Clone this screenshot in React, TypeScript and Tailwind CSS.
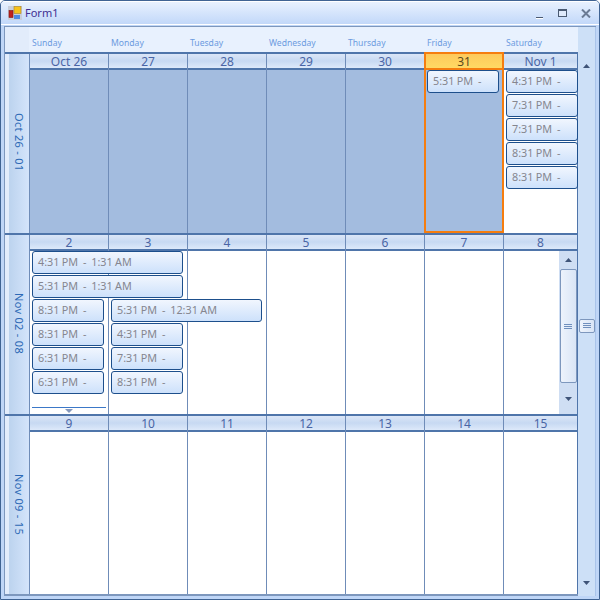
import React from "react";

interface Appt {
  text: string;
  wide?: boolean;
}

interface Day {
  label: string;
  muted?: boolean;
  selected?: boolean;
  skip?: number;
  appts?: Array<Appt>;
  more?: boolean;
  scroll?: boolean;
}

const dayNames = ["Sunday", "Monday", "Tuesday", "Wednesday", "Thursday", "Friday", "Saturday"];

const weeks: Array<{ range: string; height: string; days: Array<Day> }> = [
  {
    range: "Oct 26 - 01",
    height: "h-[181px]",
    days: [
      { label: "Oct 26", muted: true },
      { label: "27", muted: true },
      { label: "28", muted: true },
      { label: "29", muted: true },
      { label: "30", muted: true },
      { label: "31", muted: true, selected: true, appts: [{ text: "5:31 PM  -" }] },
      {
        label: "Nov 1",
        appts: [
          { text: "4:31 PM  -" },
          { text: "7:31 PM  -" },
          { text: "7:31 PM  -" },
          { text: "8:31 PM  -" },
          { text: "8:31 PM  -" },
        ],
      },
    ],
  },
  {
    range: "Nov 02 - 08",
    height: "h-[181px]",
    days: [
      {
        label: "2",
        more: true,
        appts: [
          { text: "4:31 PM  -  1:31 AM", wide: true },
          { text: "5:31 PM  -  1:31 AM", wide: true },
          { text: "8:31 PM  -" },
          { text: "8:31 PM  -" },
          { text: "6:31 PM  -" },
          { text: "6:31 PM  -" },
        ],
      },
      {
        label: "3",
        skip: 2,
        appts: [
          { text: "5:31 PM  -  12:31 AM", wide: true },
          { text: "4:31 PM  -" },
          { text: "7:31 PM  -" },
          { text: "8:31 PM  -" },
        ],
      },
      { label: "4" },
      { label: "5" },
      { label: "6" },
      { label: "7" },
      { label: "8", scroll: true },
    ],
  },
  {
    range: "Nov 09 - 15",
    height: "h-[180px]",
    days: [
      { label: "9" },
      { label: "10" },
      { label: "11" },
      { label: "12" },
      { label: "13" },
      { label: "14" },
      { label: "15" },
    ],
  },
];

const ArrowUp = () => (
  <svg width="7" height="4" viewBox="0 0 7 4" className="fill-[#3f5478]">
    <path d="M3.5 0 7 4H0z" />
  </svg>
);

const ArrowDown = () => (
  <svg width="7" height="4" viewBox="0 0 7 4" className="fill-[#3f5478]">
    <path d="M0 0h7L3.5 4z" />
  </svg>
);

const Grip = () => (
  <div className="flex flex-col gap-[1px]">
    <div className="w-[8px] h-[1px] bg-[#6f8fbd]" />
    <div className="w-[8px] h-[1px] bg-[#6f8fbd]" />
    <div className="w-[8px] h-[1px] bg-[#6f8fbd]" />
  </div>
);

const AppIcon = () => (
  <svg width="14" height="14" viewBox="0 0 14 14">
    <rect x="0" y="0" width="14" height="14" fill="#c9cfdb" />
    <rect x="6" y="0.5" width="7" height="7" fill="#f6c21c" stroke="#a8842c" strokeWidth="0.6" />
    <rect x="1" y="4.5" width="4" height="7" fill="#c0201c" stroke="#7a1a14" strokeWidth="0.6" />
    <rect x="6" y="9" width="6" height="4" fill="#4f8be0" />
  </svg>
);

const Appointment = ({ appt }: { appt: Appt }) => (
  <div
    className={`relative z-10 shrink-0 ${appt.wide ? "w-[151px]" : "w-[72px]"} h-[23px] mb-[1px] flex items-center pl-[5px] whitespace-pre overflow-hidden rounded-[3px] border border-[#1d4f8c] bg-gradient-to-b from-[#f1f6fe] to-[#cde1fb] text-[10.8px] [word-spacing:-0.4px] text-[#85868f]`}
  >
    {appt.text}
  </div>
);

const WeekScrollbar = () => (
  <div className="absolute right-0 top-0 bottom-0 w-[18px] bg-[#cfdef3] flex flex-col items-center">
    <div className="h-[18px] flex items-center justify-center">
      <ArrowUp />
    </div>
    <div className="w-[17px] h-[114px] flex items-center justify-center rounded-[2px] border border-[#7d97bd] bg-gradient-to-r from-[#edf3fc] to-[#d9e5f6]">
      <Grip />
    </div>
    <div className="flex-1 flex items-center justify-center">
      <ArrowDown />
    </div>
  </div>
);

const DayCell = ({ day, last }: { day: Day; last: boolean }) => (
  <div
    className={`relative shrink-0 flex flex-col border-l border-[#6f8cb8] ${
      last ? "w-[75px] border-r border-r-[#4f75aa]" : "w-[79px]"
    }`}
  >
    <div
      className={`h-[16px] shrink-0 flex items-center justify-center pt-[1px] border-b-2 text-[12px] leading-none ${
        day.selected
          ? "border-[#f57d0f] bg-gradient-to-b from-[#fdc95c] to-[#ffd964] text-[#5a4a1e]"
          : "border-[#4f75aa] bg-gradient-to-b from-[#dbe6f7] via-[#c7d9f2] to-[#dde9fa] text-[#4a65a5]"
      }`}
    >
      {day.label}
    </div>
    <div
      className={`relative flex-1 min-h-0 flex flex-col px-[2px] ${
        day.muted ? "bg-[#a3bcdf]" : "bg-white"
      }`}
    >
      {day.skip ? <div className="h-[48px] shrink-0" /> : null}
      {day.appts?.map((appt, i) => (
        <Appointment key={i} appt={appt} />
      ))}
      {day.more ? (
        <div className="mt-auto mb-[1px] flex flex-col items-center">
          <div className="w-[74px] h-[1px] bg-[#3b78c8]" />
          <svg width="8" height="4" viewBox="0 0 8 4" className="mt-[1px] fill-[#8497bb]">
            <path d="M0 0h8L4 4z" />
          </svg>
        </div>
      ) : null}
      {day.scroll ? <WeekScrollbar /> : null}
    </div>
    {day.selected ? (
      <div className="absolute -left-[1px] -top-[2px] -right-[1px] bottom-0 z-20 border-2 border-[#f57d0f] pointer-events-none" />
    ) : null}
  </div>
);

export default function App() {
  return (
    <div
      className="w-[600px] h-[600px] flex flex-col overflow-hidden bg-[#bfd6f7] border border-[#3f6393] rounded-t-[5px]"
      style={{ fontFamily: '"Noto Sans", "Open Sans", sans-serif' }}
    >
      {/* title bar */}
      <div className="h-[24px] shrink-0 flex items-center justify-between pl-[7px] pr-[8px] bg-gradient-to-b from-[#e8f1fe] to-[#c2d8f9] border-t border-b border-white">
        <div className="flex items-center gap-[3px]">
          <AppIcon />
          <span className="text-[11px] text-[#3e2f92]">Form1</span>
        </div>
        <div className="flex items-center">
          <div className="w-[7px] h-[2px] mt-[9px] bg-[#4a5a72] border-b border-white" />
          <div className="ml-[15px] w-[9px] h-[8px] border border-[#4a5a72] border-t-2 bg-[#dfeafb]" />
          <svg width="10" height="9" viewBox="0 0 10 9" className="ml-[14px] stroke-[#6b7b94]" strokeWidth="2">
            <path d="M1 0.5 9 8.5M9 0.5 1 8.5" />
          </svg>
        </div>
      </div>

      {/* client area */}
      <div className="flex-1 min-h-0 flex mx-[3px] mb-[3px] mt-[1px] border border-[#7d97bd] border-r-0 border-b-0">
        <div className="flex-1 min-w-0 flex flex-col">
          {/* day names */}
          <div className="h-[25px] shrink-0 flex bg-[#e8f1fe]">
            <div className="w-[24px] shrink-0 bg-[#e2ecfb]" />
            {dayNames.map((name) => (
              <div
                key={name}
                className="w-[79px] shrink-0 pl-[3px] pt-[10px] text-[8.6px] leading-[13px] text-[#6c9be0]"
              >
                {name}
              </div>
            ))}
          </div>

          {/* weeks */}
          {weeks.map((week) => (
            <div key={week.range} className={`${week.height} shrink-0 flex border-t-2 border-[#4f75aa]`}>
              <div className="w-[24px] shrink-0 flex bg-[#e2ecfb] pl-[4px]">
                <div className="flex-1 flex items-center justify-center pr-[1px] pb-[2px] bg-gradient-to-r from-[#bcd3ee] to-[#d4e4fb]">
                  <span className="text-[11px] tracking-[0.3px] text-[#2c69b5] [writing-mode:vertical-rl] whitespace-nowrap">
                    {week.range}
                  </span>
                </div>
              </div>
              {week.days.map((day, i) => (
                <DayCell key={day.label} day={day} last={i === 6} />
              ))}
            </div>
          ))}
          <div className="h-[2px] shrink-0 bg-[#7d97bd]" />
        </div>

        {/* main scrollbar */}
        <div className="w-[18px] shrink-0 flex flex-col items-center bg-[#cde0f7] border-r border-r-[#a9c4ea]">
          <div className="h-[35px] w-full" />
          <div className="flex items-center justify-center h-[8px]">
            <ArrowUp />
          </div>
          <div className="flex-1 flex items-center justify-center">
            <div className="w-[16px] h-[14px] flex items-center justify-center rounded-[2px] border border-[#7d97bd] bg-gradient-to-r from-[#edf3fc] to-[#d9e5f6]">
              <Grip />
            </div>
          </div>
          <div className="h-[15px] flex items-start justify-center">
            <ArrowDown />
          </div>
        </div>
      </div>
    </div>
  );
}
